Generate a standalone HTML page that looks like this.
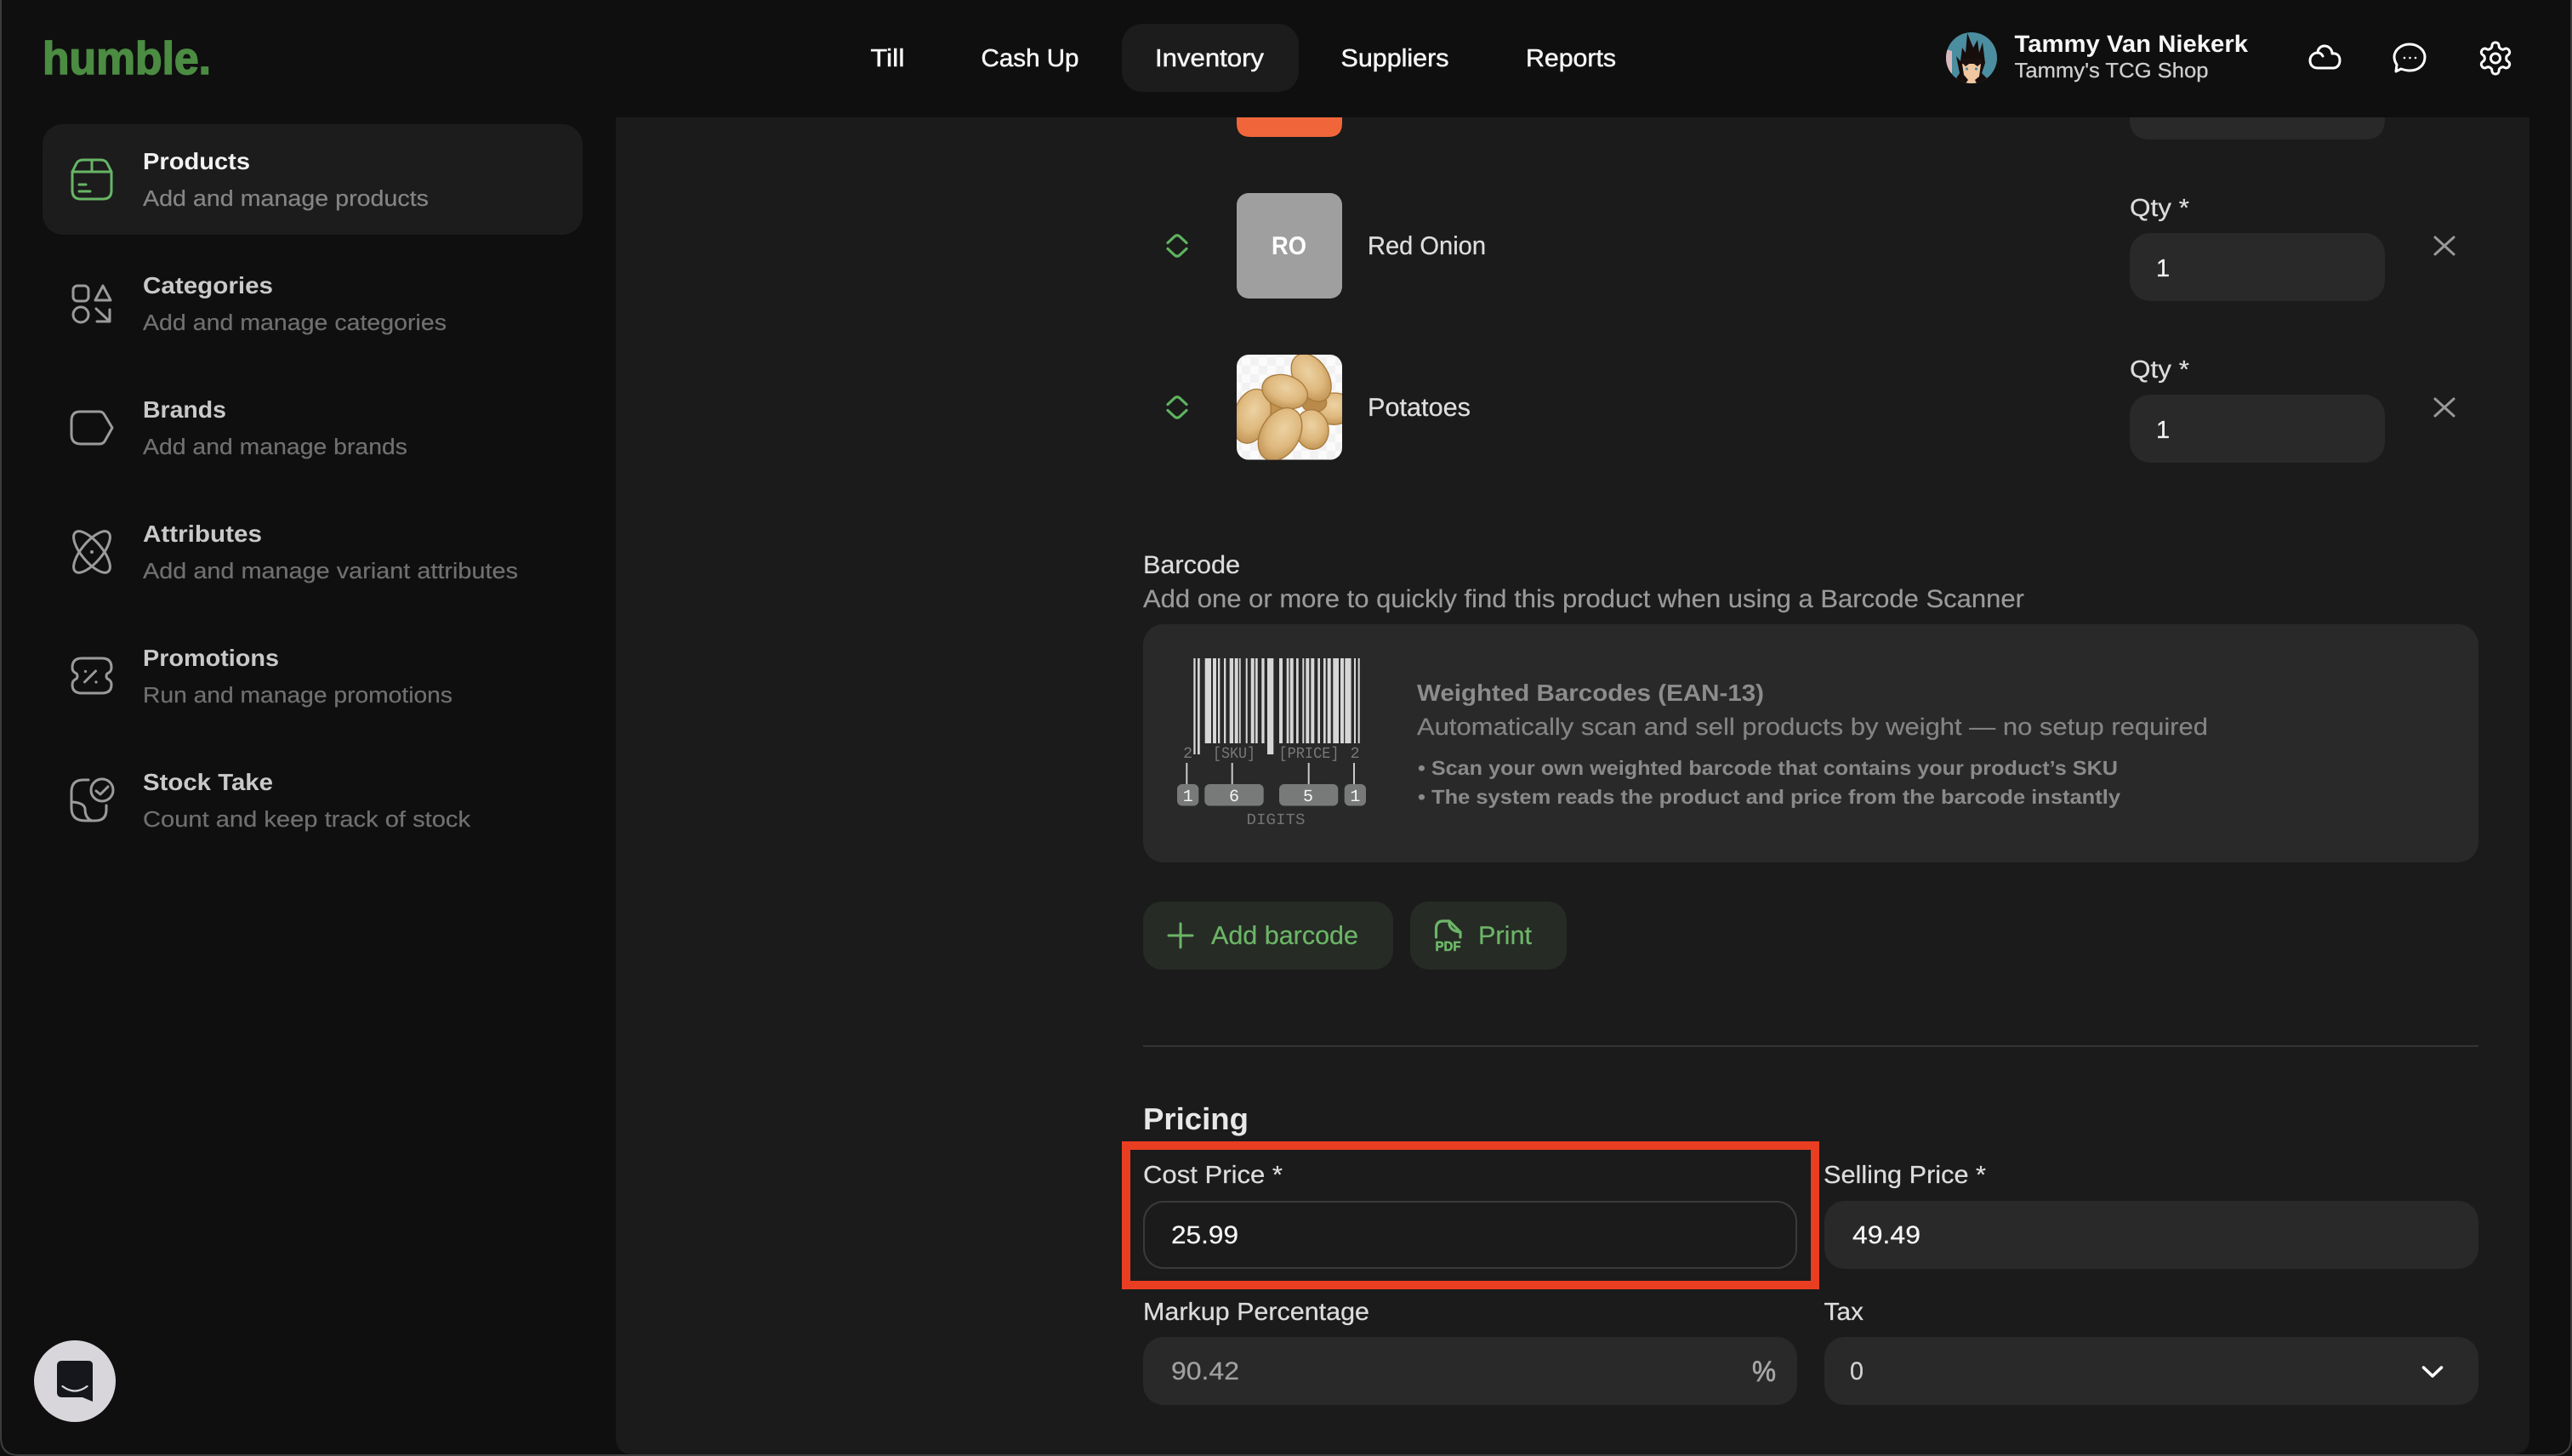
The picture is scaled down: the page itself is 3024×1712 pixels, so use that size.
<!DOCTYPE html>
<html lang="en"><head><meta charset="utf-8"><title>humble. Inventory</title>
<style>
html,body{margin:0;padding:0;width:3024px;height:1712px;overflow:hidden;background:#0f0f0f}
svg{display:block}
text{font-family:"Liberation Sans",sans-serif;text-rendering:geometricPrecision;white-space:pre}
.b{font-weight:700}
.m{stroke:currentColor;stroke-width:.5}
.mono{font-family:"Liberation Mono",monospace}
.i{fill:none;stroke-linecap:round;stroke-linejoin:round}
</style></head><body>
<svg xmlns="http://www.w3.org/2000/svg" width="3024" height="1712" viewBox="0 0 3024 1712">
<defs>
<radialGradient id="p" cx="50%" cy="38%" r="68%"><stop offset="0" stop-color="#ecd2a2"/><stop offset=".55" stop-color="#dfb97f"/><stop offset="1" stop-color="#bb8d4c"/></radialGradient>
<pattern id="ch" width="60" height="60" patternUnits="userSpaceOnUse"><rect width="60" height="60" fill="#fbfbfb"/><rect width="30" height="30" fill="#f2f2f2"/><rect x="30" y="30" width="30" height="30" fill="#f2f2f2"/></pattern>
<clipPath id="pc"><rect x="402" y="861" width="372" height="371" rx="42"/></clipPath>
<clipPath id="av"><circle cx="2318" cy="68" r="30"/></clipPath>
</defs>

<rect width="3024" height="1712" fill="#0f0f0f"/>
<path d="M724 138H2974V1690Q2974 1710 2954 1710H744Q724 1710 724 1690Z" fill="#1b1b1b"/>
<path d="M1 0V1690Q1 1711 22 1711H3002Q3023 1711 3023 1690V0" fill="none" stroke="#3c3c3c" stroke-width="2"/>

<text x="50" y="87" font-size="54" class="b" fill="#4b8c42" stroke="#4b8c42" stroke-width="1.6" textLength="198" lengthAdjust="spacingAndGlyphs">humble.</text>

<rect x="1319" y="28" width="208" height="80" rx="24" fill="#1c1c1c"/>
<g font-size="29" fill="#f5f5f5" color="#f5f5f5">
<text class="m" x="1023.500" y="78" textLength="40" lengthAdjust="spacingAndGlyphs">Till</text>
<text class="m" x="1153.500" y="78" textLength="115" lengthAdjust="spacingAndGlyphs">Cash Up</text>
<text class="m" x="1358" y="78" textLength="128" lengthAdjust="spacingAndGlyphs">Inventory</text>
<text class="m" x="1576.500" y="78" textLength="127" lengthAdjust="spacingAndGlyphs">Suppliers</text>
<text class="m" x="1794" y="78" textLength="106" lengthAdjust="spacingAndGlyphs">Reports</text>
</g>

<g clip-path="url(#av)">
<rect x="2288" y="38" width="60" height="60" fill="#4b8ea0"/>
<path d="M2288 58L2295 60V86L2288 84Z" fill="#d9b9bd"/>
<path d="M2296 98L2304 86 2300 66 2305 72 2307 56 2311 62 2313 39 2320 56 2325 47 2327 62 2331 50 2334 74 2330 86 2342 98Z" fill="#170d0c"/>
<path d="M2307 75L2329 75 2327 90 2322 94 2324 98H2311L2314 94 2309 88Z" fill="#f0c7a0"/>
<path d="M2306 73L2311 78 2318 73 2325 78 2331 73 2329 69H2308Z" fill="#1c1010"/>
<circle cx="2312.500" cy="81" r="1.600" fill="#4b8ea0"/><circle cx="2323.500" cy="81" r="1.600" fill="#4b8ea0"/>
</g>
<text x="2368.500" y="61" font-size="28" class="b" fill="#f7f7f7" textLength="274.500" lengthAdjust="spacingAndGlyphs">Tammy Van Niekerk</text>
<text x="2368.500" y="91" font-size="24.500" fill="#cfcfcf" stroke="#cfcfcf" stroke-width=".25" textLength="228" lengthAdjust="spacingAndGlyphs">Tammy's TCG Shop</text>

<g class="i" stroke="#fff" stroke-width="3">
<path d="M2725 80C2719 80 2716 76 2716 71C2716 66 2720 62 2725 62C2725 57 2729 54 2733 54C2738 54 2742 58 2742 63C2748 62 2751 66 2751 71C2751 76 2748 80 2743 80ZM2725 62C2728 62 2730 64 2731 66"/>
<path d="M2833 52C2843 52 2851 59 2851 67C2851 77 2843 83 2833 83C2829 83 2826 82 2823 81L2817 84L2818 76C2816 73 2815 70 2815 67C2815 59 2823 52 2833 52Z"/>
<g transform="translate(2911.800 46.300) scale(1.850)" stroke-width="1.600"><path d="M12.220 2h-.44a2 2 0 0 0-2 2v.18a2 2 0 0 1-1 1.730l-.43.25a2 2 0 0 1-2 0l-.15-.08a2 2 0 0 0-2.730.73l-.22.38a2 2 0 0 0 .73 2.730l.15.1a2 2 0 0 1 1 1.720v.51a2 2 0 0 1-1 1.740l-.15.09a2 2 0 0 0-.73 2.730l.22.38a2 2 0 0 0 2.730.73l.15-.08a2 2 0 0 1 2 0l.43.25a2 2 0 0 1 1 1.730V20a2 2 0 0 0 2 2h.44a2 2 0 0 0 2-2v-.18a2 2 0 0 1 1-1.730l.43-.25a2 2 0 0 1 2 0l.15.08a2 2 0 0 0 2.730-.73l.22-.39a2 2 0 0 0-.73-2.730l-.15-.08a2 2 0 0 1-1-1.740v-.5a2 2 0 0 1 1-1.740l.15-.09a2 2 0 0 0 .73-2.730l-.22-.38a2 2 0 0 0-2.730-.73l-.15.08a2 2 0 0 1-2 0l-.43-.25a2 2 0 0 1-1-1.730V4a2 2 0 0 0-2-2z"/><circle cx="12" cy="12" r="3"/></g>
</g>
<g fill="#fff"><circle cx="2827" cy="68" r="1.300"/><circle cx="2833.500" cy="68" r="1.300"/><circle cx="2840" cy="68" r="1.300"/></g>

<rect x="50" y="146" width="635" height="130" rx="24" fill="#1c1c1c"/>
<g font-size="27.500" class="b" fill="#c9c9c9">
<text x="168" y="199" fill="#f2f2f2" textLength="126" lengthAdjust="spacingAndGlyphs">Products</text>
<text x="168" y="345" textLength="153" lengthAdjust="spacingAndGlyphs">Categories</text>
<text x="168" y="491" textLength="98" lengthAdjust="spacingAndGlyphs">Brands</text>
<text x="168" y="637" textLength="140" lengthAdjust="spacingAndGlyphs">Attributes</text>
<text x="168" y="783" textLength="160" lengthAdjust="spacingAndGlyphs">Promotions</text>
<text x="168" y="929" textLength="153" lengthAdjust="spacingAndGlyphs">Stock Take</text>
</g>
<g font-size="26" fill="#707070" stroke="#707070" stroke-width=".2">
<text x="168" y="242" fill="#858585" stroke="#858585" textLength="336" lengthAdjust="spacingAndGlyphs">Add and manage products</text>
<text x="168" y="388" textLength="357" lengthAdjust="spacingAndGlyphs">Add and manage categories</text>
<text x="168" y="534" textLength="311" lengthAdjust="spacingAndGlyphs">Add and manage brands</text>
<text x="168" y="680" textLength="441" lengthAdjust="spacingAndGlyphs">Add and manage variant attributes</text>
<text x="168" y="826" textLength="364" lengthAdjust="spacingAndGlyphs">Run and manage promotions</text>
<text x="168" y="972" textLength="385" lengthAdjust="spacingAndGlyphs">Count and keep track of stock</text>
</g>

<g class="i" stroke="#67b566" stroke-width="3">
<path d="M85 202V224Q85 234 95 234H121Q131 234 131 224V202L126 192Q124 188 118 188H98Q92 188 90 192ZM85 202H131M108 188V202"/>
<path d="M93 217H101M93 225H106"/>
</g>
<g class="i" stroke="#9b9b9b" stroke-width="3">
<rect x="86" y="336" width="18" height="18" rx="5"/>
<path d="M121 336L112 353H130Z"/>
<ellipse cx="95" cy="370" rx="9" ry="9"/>
<path d="M113 363L128 377M129 364V378H114"/>
<path d="M94 484H117Q121 484 123 488L132 503L123 519Q121 522 117 522H95Q84 522 84 511V495Q84 484 94 484Z"/>
<ellipse cx="108" cy="649" rx="12" ry="30" transform="rotate(40 108 649)"/>
<ellipse cx="108" cy="649" rx="12" ry="30" transform="rotate(-40 108 649)"/>
<path d="M96 774H120Q131 774 131 785Q131 790 126 792Q124 795 126 798Q131 800 131 805Q131 815 120 815H96Q85 815 85 805Q85 800 90 798Q92 795 90 792Q85 790 85 785Q85 774 96 774Z"/>
<path d="M99.500 802L112.500 789"/>
<circle cx="120" cy="929" r="13"/>
<path d="M113 930L118 934L127 925"/>
<path d="M104 917H98Q84 917 84 931V950Q84 965 100 965H112Q125 965 125 952V947M85 943Q99 944 100 951Q100 962 108 965"/>
</g>
<circle cx="108" cy="649" r="2" fill="#9b9b9b"/><circle cx="100.500" cy="789.500" r="1.600" fill="#9b9b9b"/><circle cx="113" cy="802" r="1.600" fill="#9b9b9b"/>

<circle cx="88" cy="1624" r="48" fill="#d9d6db"/>
<path d="M73 1600H104Q109 1600 109 1605V1648L97 1643H73Q67 1643 67 1637V1606Q67 1600 73 1600Z" fill="#15171c"/>
<path d="M73.500 1630Q88 1641 102.500 1630" fill="none" stroke="#d9d6db" stroke-width="2.200" stroke-linecap="round"/>

<path d="M1454 138H1578V145Q1578 161 1562 161H1470Q1454 161 1454 145Z" fill="#f0663a"/>
<path d="M2504 138H2804V140Q2804 164 2780 164H2528Q2504 164 2504 140Z" fill="#292929"/>

<g class="i" stroke="#5fb35f" stroke-width="3.200">
<path d="M1373 285.500L1381 278Q1384 275.500 1387 278L1395 285.500M1373 292.500L1381 300Q1384 302.500 1387 300L1395 292.500"/>
<path d="M1373 475.500L1381 468Q1384 465.500 1387 468L1395 475.500M1373 482.500L1381 490Q1384 492.500 1387 490L1395 482.500"/>
</g>

<rect x="1454" y="227" width="124" height="124" rx="14" fill="#9f9f9f"/>
<text x="1495" y="299" font-size="30" class="b" fill="#fff" textLength="41" lengthAdjust="spacingAndGlyphs">RO</text>

<g transform="translate(1320 130) scale(.33333)" clip-path="url(#pc)">
<rect x="402" y="861" width="372" height="371" fill="url(#ch)"/>
<g stroke="#a87b3e" stroke-width="4">
<ellipse cx="745" cy="1052" rx="72" ry="56" fill="url(#p)"/>
<ellipse cx="675" cy="1030" rx="44" ry="34" fill="#b98a4a"/>
<ellipse cx="665" cy="942" rx="60" ry="92" transform="rotate(-32 665 942)" fill="url(#p)"/>
<ellipse cx="535" cy="1050" rx="34" ry="34" fill="#c2944f"/>
<ellipse cx="455" cy="1078" rx="64" ry="98" transform="rotate(18 455 1078)" fill="url(#p)"/>
<ellipse cx="572" cy="992" rx="82" ry="58" transform="rotate(18 572 992)" fill="url(#p)"/>
<ellipse cx="668" cy="1125" rx="58" ry="70" transform="rotate(-8 668 1125)" fill="url(#p)"/>
<ellipse cx="555" cy="1142" rx="68" ry="100" transform="rotate(30 555 1142)" fill="url(#p)"/>
</g>
</g>

<g font-size="30" fill="#dedede" stroke="#dedede" stroke-width=".25">
<text x="1608" y="299" textLength="139" lengthAdjust="spacingAndGlyphs">Red Onion</text>
<text x="1608" y="489" textLength="121" lengthAdjust="spacingAndGlyphs">Potatoes</text>
</g>

<g font-size="29" fill="#dcdcdc" stroke="#dcdcdc" stroke-width=".25">
<text x="2504" y="254" textLength="70" lengthAdjust="spacingAndGlyphs">Qty *</text>
<text x="2504" y="444" textLength="70" lengthAdjust="spacingAndGlyphs">Qty *</text>
</g>
<rect x="2504" y="274" width="300" height="80" rx="24" fill="#292929"/>
<rect x="2504" y="464" width="300" height="80" rx="24" fill="#292929"/>
<g font-size="29" fill="#f2f2f2" stroke="#f2f2f2" stroke-width=".25">
<text x="2535" y="325">1</text>
<text x="2535" y="515">1</text>
</g>
<g class="i" stroke="#999" stroke-width="3">
<path d="M2863 279L2885 299M2885 279L2863 299"/>
<path d="M2863 469L2885 489M2885 469L2863 489"/>
</g>

<text x="1344" y="674" font-size="29.500" fill="#dcdcdc" stroke="#dcdcdc" stroke-width=".25" textLength="114" lengthAdjust="spacingAndGlyphs">Barcode</text>
<text x="1344" y="714" font-size="29.500" fill="#9a9a9a" stroke="#9a9a9a" stroke-width=".2" textLength="1036" lengthAdjust="spacingAndGlyphs">Add one or more to quickly find this product when using a Barcode Scanner</text>
<rect x="1344" y="734" width="1570" height="280" rx="24" fill="#292929"/>

<g fill="#d6d6d6">
<rect x="1403.300" y="774" width="2.300" height="113"/><rect x="1408" y="774" width="2.700" height="113"/>
<rect x="1416.700" y="774" width="7.300" height="100"/><rect x="1426" y="774" width="4" height="100"/>
<rect x="1432" y="774" width="2.300" height="100"/><rect x="1439" y="774" width="2.300" height="100"/>
<rect x="1445.700" y="774" width="4.300" height="100"/><rect x="1451.700" y="774" width="4" height="100"/>
<rect x="1457" y="774" width="1.700" height="100"/><rect x="1464.700" y="774" width="2" height="100"/>
<rect x="1470.700" y="774" width="4" height="100"/><rect x="1476" y="774" width="2.700" height="100"/>
<rect x="1483.300" y="774" width="3.300" height="100"/><rect x="1490" y="774" width="7.300" height="113"/>
<rect x="1504" y="774" width="4" height="100"/><rect x="1512.700" y="774" width="2.700" height="100"/>
<rect x="1516.700" y="774" width="4" height="100"/><rect x="1524" y="774" width="2.700" height="100"/>
<rect x="1531.300" y="774" width="2" height="100"/><rect x="1535.300" y="774" width="4" height="100"/>
<rect x="1541.300" y="774" width="4" height="100"/><rect x="1549.300" y="774" width="2.700" height="100"/>
<rect x="1556" y="774" width="2.700" height="100"/><rect x="1560.700" y="774" width="4" height="100"/>
<rect x="1567.300" y="774" width="6.700" height="100"/><rect x="1576" y="774" width="4" height="100"/>
<rect x="1581.300" y="774" width="7.300" height="100"/><rect x="1592" y="774" width="2" height="100"/>
<rect x="1596.700" y="774" width="2" height="100"/>
</g>
<g font-size="18.500" fill="#787878">
<text class="mono" x="1391" y="891">2</text>
<text class="mono" x="1426" y="891" textLength="50" lengthAdjust="spacingAndGlyphs">[SKU]</text>
<text class="mono" x="1503.500" y="891" textLength="71" lengthAdjust="spacingAndGlyphs">[PRICE]</text>
<text class="mono" x="1587.500" y="891">2</text>
<text class="mono" x="1465.500" y="969" fill="#747474" textLength="69" lengthAdjust="spacingAndGlyphs">DIGITS</text>
</g>
<g fill="#c9c9c9">
<rect x="1394.300" y="897" width="2" height="25"/><rect x="1447.700" y="897" width="2" height="25"/>
<rect x="1537.700" y="897" width="2" height="25"/><rect x="1591" y="897" width="2" height="25"/>
</g>
<g fill="#787a7a">
<rect x="1384" y="922" width="25.300" height="25.500" rx="6"/><rect x="1416.300" y="922" width="69.400" height="25.500" rx="6"/>
<rect x="1504" y="922" width="69.300" height="25.500" rx="6"/><rect x="1580.700" y="922" width="25.300" height="25.500" rx="6"/>
</g>
<g font-size="20" fill="#f5f5f5">
<text class="mono" x="1390.700" y="942">1</text><text class="mono" x="1445" y="942">6</text>
<text class="mono" x="1532" y="942">5</text><text class="mono" x="1587.400" y="942">1</text>
</g>

<text x="1666" y="824" font-size="27.500" class="b" fill="#8c8c8c" textLength="408" lengthAdjust="spacingAndGlyphs">Weighted Barcodes (EAN-13)</text>
<text x="1666" y="864" font-size="28" fill="#848484" stroke="#848484" stroke-width=".2" textLength="930" lengthAdjust="spacingAndGlyphs">Automatically scan and sell products by weight — no setup required</text>
<g font-size="23.500" class="b" fill="#8a8a8a">
<text x="1667" y="911" textLength="823" lengthAdjust="spacingAndGlyphs">• Scan your own weighted barcode that contains your product’s SKU</text>
<text x="1667" y="945" textLength="826" lengthAdjust="spacingAndGlyphs">• The system reads the product and price from the barcode instantly</text>
</g>

<rect x="1344" y="1060" width="294" height="80" rx="22" fill="#262b25"/>
<rect x="1658" y="1060" width="184" height="80" rx="22" fill="#262b25"/>
<path class="i" stroke="#6cb567" stroke-width="3" d="M1388 1086V1114M1374 1100H1402"/>
<g font-size="30" fill="#6cb567" stroke="#6cb567" stroke-width=".25">
<text x="1424" y="1110" textLength="173" lengthAdjust="spacingAndGlyphs">Add barcode</text>
<text x="1738" y="1110" textLength="63" lengthAdjust="spacingAndGlyphs">Print</text>
</g>
<path class="i" stroke="#6cb567" stroke-width="3.200" d="M1688.500 1102V1092Q1688.500 1083 1697 1083H1704L1717 1096V1102M1704 1083V1087Q1706 1095 1717 1096"/>
<text x="1687.500" y="1118" font-size="16" class="b" fill="#6cb567" stroke="#6cb567" stroke-width=".6" textLength="30" lengthAdjust="spacingAndGlyphs">PDF</text>

<rect x="1344" y="1229" width="1570" height="2" fill="#343434"/>

<text x="1344" y="1328" font-size="36" class="b" fill="#e8e8e8" textLength="124" lengthAdjust="spacingAndGlyphs">Pricing</text>
<g font-size="29" fill="#dcdcdc" stroke="#dcdcdc" stroke-width=".25">
<text x="1344" y="1391" textLength="164" lengthAdjust="spacingAndGlyphs">Cost Price *</text>
<text x="2144" y="1391" textLength="191" lengthAdjust="spacingAndGlyphs">Selling Price *</text>
<text x="1344" y="1552" textLength="266" lengthAdjust="spacingAndGlyphs">Markup Percentage</text>
<text x="2144.500" y="1552" textLength="46.500" lengthAdjust="spacingAndGlyphs">Tax</text>
</g>
<rect x="1345" y="1413" width="767" height="78" rx="23" fill="#1b1b1b" stroke="#3a3a3a" stroke-width="2"/>
<rect x="2145" y="1412" width="769" height="80" rx="24" fill="#292929"/>
<rect x="1344" y="1572" width="769" height="80" rx="24" fill="#292929"/>
<rect x="2145" y="1572" width="769" height="80" rx="24" fill="#292929"/>
<g font-size="29.500" stroke-width=".25">
<text x="1377" y="1462" fill="#f5f5f5" stroke="#f5f5f5" textLength="79" lengthAdjust="spacingAndGlyphs">25.99</text>
<text x="2178" y="1462" fill="#f5f5f5" stroke="#f5f5f5" textLength="80" lengthAdjust="spacingAndGlyphs">49.49</text>
<text x="1377" y="1622" fill="#a0a0a0" stroke="#a0a0a0" textLength="80" lengthAdjust="spacingAndGlyphs">90.42</text>
<text x="2060" y="1624" fill="#a6a6a6" stroke="#a6a6a6" stroke-width=".7" font-size="34" textLength="28" lengthAdjust="spacingAndGlyphs">%</text>
<text x="2175" y="1622" fill="#d0d0d0" stroke="#d0d0d0" textLength="16" lengthAdjust="spacingAndGlyphs">0</text>
</g>
<path class="i" stroke="#fff" stroke-width="3.600" d="M2849.500 1608L2860 1618L2870.500 1608"/>

<rect x="1324" y="1347" width="810" height="164" fill="none" stroke="#e93e22" stroke-width="10"/>
</svg>
</body></html>
